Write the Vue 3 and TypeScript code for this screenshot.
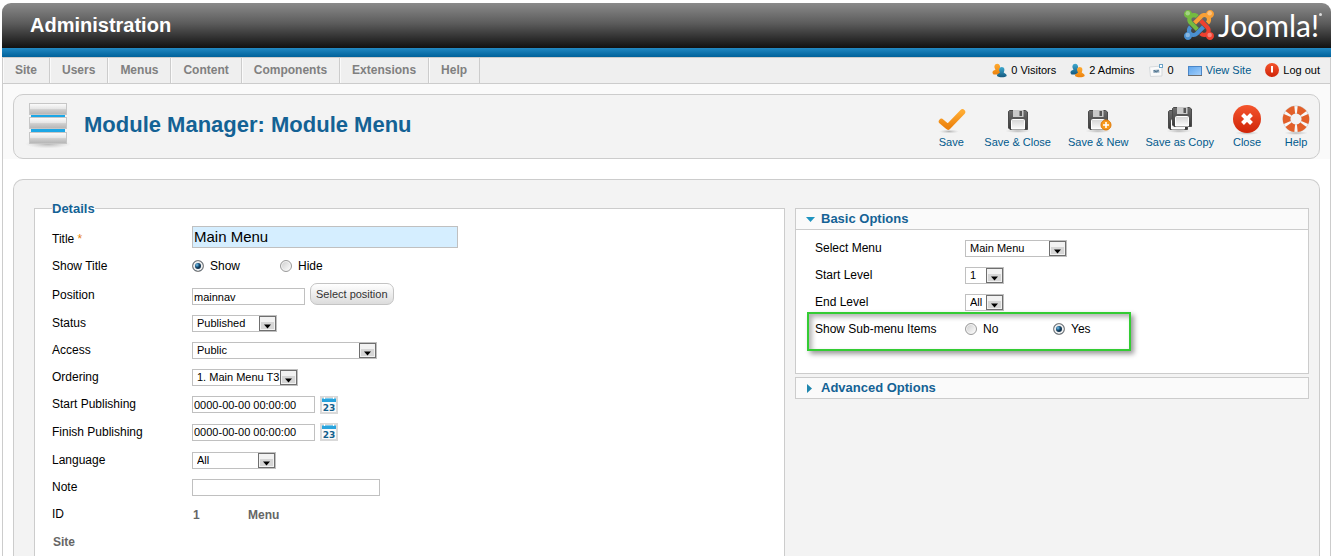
<script setup lang="ts">
import { reactive, ref } from 'vue'

interface SelectField {
  id: string
  label: string
  value: string
  size: string
}

const menu: string[] = ['Site', 'Users', 'Menus', 'Content', 'Components', 'Extensions', 'Help']

const title = ref('Main Menu')
const showTitle = ref('1')
const position = ref('mainnav')
const startPublishing = ref('0000-00-00 00:00:00')
const finishPublishing = ref('0000-00-00 00:00:00')
const note = ref('')
const showSubMenu = ref('1')

const detailSelects = reactive<SelectField[]>([
  { id: 'status', label: 'Status', value: 'Published', size: 'w-status' },
  { id: 'access', label: 'Access', value: 'Public', size: 'w-access' },
  { id: 'ordering', label: 'Ordering', value: '1. Main Menu T3', size: 'w-ordering' },
])

const optionSelects = reactive<SelectField[]>([
  { id: 'menutype', label: 'Select Menu', value: 'Main Menu', size: 'w-menu' },
  { id: 'start-level', label: 'Start Level', value: '1', size: 'w-level' },
  { id: 'end-level', label: 'End Level', value: 'All', size: 'w-level' },
])

const lifebuoyAngles: number[] = [0, 60, 120, 180, 240, 300]
</script>

<template>
  <div class="page">
    <svg class="defs" width="0" height="0" aria-hidden="true">
      <defs>
        <linearGradient id="g-orange" x1="0" y1="0" x2="0" y2="1">
          <stop offset="0" stop-color="#ffab32" /><stop offset="1" stop-color="#ec820d" />
        </linearGradient>
        <linearGradient id="g-teal" x1="0" y1="0" x2="0" y2="1">
          <stop offset="0" stop-color="#3fa9cf" /><stop offset="1" stop-color="#14597f" />
        </linearGradient>
        <linearGradient id="g-dark" x1="0" y1="0" x2="0" y2="1">
          <stop offset="0" stop-color="#6d6d6d" /><stop offset="1" stop-color="#393939" />
        </linearGradient>
        <linearGradient id="g-paper" x1="0" y1="0" x2="0" y2="1">
          <stop offset="0" stop-color="#d4d4d4" /><stop offset="1" stop-color="#fbfbfb" />
        </linearGradient>
        <linearGradient id="g-red" x1="0" y1="0" x2="0" y2="1">
          <stop offset="0" stop-color="#f4552d" /><stop offset="1" stop-color="#cf2408" />
        </linearGradient>
        <linearGradient id="g-slab" x1="0" y1="0" x2="0" y2="1">
          <stop offset="0" stop-color="#fdfdfd" /><stop offset="0.5" stop-color="#e4e4e4" />
          <stop offset="0.55" stop-color="#cfcfcf" /><stop offset="1" stop-color="#b4b4b4" />
        </linearGradient>
        <linearGradient id="g-screen" x1="0" y1="0" x2="1" y2="1">
          <stop offset="0" stop-color="#5ea6ee" /><stop offset="1" stop-color="#a5d0fb" />
        </linearGradient>
        <radialGradient id="g-shadow">
          <stop offset="0" stop-color="#999" stop-opacity="0.7" /><stop offset="1" stop-color="#bbb" stop-opacity="0" />
        </radialGradient>
        <g id="floppy">
          <path d="M1.5 0.5H17.5L19.5 2V19.5H2L0.5 18V1.5Z" fill="url(#g-dark)" stroke="#4a4a4a" />
          <rect x="5" y="0" width="10.500" height="7" fill="#c9c9c9" />
          <rect x="11.500" y="1" width="2.500" height="5" fill="#555" />
          <path d="M4.500 9.500H15.500Q16.500 9.500 16.500 10.500V19H3.500V10.500Q3.500 9.500 4.500 9.500Z" fill="url(#g-paper)" stroke="#fff" />
        </g>
        <path id="knot-tail" d="M16.719 14.759L14.22 17.26l-2.37 2.37-.462.466c-1.368 1.365-3.297 1.83-5.047 1.397-.327 1.424-1.604 2.49-3.13 2.49C1.438 23.983 0 22.547 0 20.772c0-1.518 1.055-2.789 2.469-3.123-.446-1.76.016-3.705 1.396-5.08l.179-.18 2.37 2.37-.184.181c-.769.779-.769 2.024 0 2.789.771.78 2.022.78 2.787 0l.465-.465 2.367-2.371 2.502-2.506z" />
        <path id="knot-head" d="M17.643 21.411c-1.822.563-3.885.12-5.328-1.318l-.18-.185 2.365-2.369.18.184c.771.768 2.018.768 2.787 0 .765-.765.769-2.010-.004-2.781l-.466-.465-2.365-2.370-2.502-2.503 2.370-2.369 2.499 2.505 2.367 2.370.464.464c1.365 1.360 1.846 3.278 1.411 5.021 1.560.224 2.759 1.560 2.759 3.180 0 1.784-1.439 3.210-3.209 3.210-1.545 0-2.851-1.096-3.135-2.565z" />
      </defs>
    </svg>

    <header class="header">
      <span class="site-name">Administration</span>
      <div class="logo">
        <svg class="logo-mark" width="30" height="30" viewBox="0 0 24 24" aria-hidden="true">
          <use href="#knot-tail" fill="#4a90d0" />
          <use href="#knot-head" fill="#ef4030" />
          <use href="#knot-tail" fill="#f9a035" transform="rotate(180 12 12)" />
          <use href="#knot-head" fill="#74bb40" transform="rotate(180 12 12)" />
          <g fill="#fff" opacity="0.35">
            <circle cx="3" cy="2.500" r="1.800" /><circle cx="20.500" cy="2.500" r="1.800" />
            <circle cx="20.500" cy="20" r="1.800" /><circle cx="3" cy="20" r="1.800" />
          </g>
        </svg>
        <span class="logo-text">Joomla!</span><span class="logo-dot"></span>
      </div>
    </header>
    <div class="stripe"></div>

    <div class="menubar">
      <nav class="menu">
        <a v-for="item in menu" :key="item" href="#">{{ item }}</a>
      </nav>
      <div class="status">
        <span class="stat">
          <svg width="15" height="15" viewBox="0 0 15 15" aria-hidden="true">
            <path d="M0.500 10C0.500 7 3 7.500 3.500 6.500C1.500 4 2.500 0.800 5.200 0.800S9 4 7.300 6.500L9 9V11.500H1.500Z" fill="url(#g-orange)" />
            <path d="M5 13C5 10.500 7.500 10.500 8 9.500C6.500 7 7 4 9.800 4S13 7 11.700 9.500C12.500 10.500 14.700 10.500 14.700 13C13 14.800 7 14.800 5 13Z" fill="url(#g-teal)" />
          </svg>
          0 Visitors
        </span>
        <span class="stat">
          <svg width="15" height="15" viewBox="0 0 15 15" aria-hidden="true">
            <path d="M0.500 10C0.500 7 3 7.500 3.500 6.500C1.500 4 2.500 0.800 5.200 0.800S9 4 7.300 6.500L9 9V11.500H1.500Z" fill="url(#g-teal)" />
            <path d="M5 13C5 10.500 7.500 10.500 8 9.500C6.500 7 7 4 9.800 4S13 7 11.700 9.500C12.500 10.500 14.700 10.500 14.700 13C13 14.800 7 14.800 5 13Z" fill="url(#g-orange)" />
          </svg>
          2 Admins
        </span>
        <span class="stat">
          <svg width="15" height="15" viewBox="0 0 15 15" aria-hidden="true">
            <path d="M0.500 4L13 3V13L1.500 13.500Z" fill="#fafafa" stroke="#d5d9dc" />
            <path d="M4 7L10 6.500L10.500 9.500L4.500 10Z" fill="#8fa8bb" />
            <path d="M5 7.500L7.500 9L9.500 7" fill="none" stroke="#466b86" />
            <rect x="10.500" y="1.500" width="3" height="3" fill="#fff" stroke="#6ba3c8" />
          </svg>
          0
        </span>
        <a class="stat link" href="#">
          <svg width="14" height="15" viewBox="0 0 14 15" aria-hidden="true">
            <rect x="0.500" y="3.500" width="13" height="9" fill="url(#g-screen)" stroke="#4a86c8" />
            <path d="M0 12.500H14" stroke="#6c6c6c" />
          </svg>
          View Site
        </a>
        <a class="stat" href="#">
          <svg width="14" height="15" viewBox="0 0 14 15" aria-hidden="true">
            <circle cx="7" cy="7" r="7" fill="url(#g-red)" />
            <path d="M7 3V9.500" stroke="#fff" stroke-width="2" />
          </svg>
          Log out
        </a>
      </div>
    </div>

    <div class="toolbar-wrap">
      <section class="toolbar">
        <svg class="module-icon" width="48" height="48" viewBox="0 0 48 48" aria-hidden="true">
          <ellipse cx="24" cy="43" rx="23" ry="4.500" fill="url(#g-shadow)" />
          <rect x="7" y="10" width="34" height="24" fill="#1ba7e6" />
          <g fill="url(#g-slab)" stroke="#c6c6c6">
            <rect x="5.500" y="2.500" width="37" height="11" />
            <rect x="5.500" y="16.500" width="37" height="11" />
            <rect x="5.500" y="31.500" width="37" height="11" />
          </g>
        </svg>
        <h1>Module Manager: Module Menu</h1>
        <div class="actions">
          <button type="button">
            <svg width="32" height="32" viewBox="0 0 32 32" aria-hidden="true">
              <ellipse cx="14" cy="27.500" rx="10" ry="2" fill="url(#g-shadow)" />
              <path d="M6.500 17.500L13 23L27.500 8" fill="none" stroke="url(#g-orange)" stroke-width="5.500" stroke-linecap="round" stroke-linejoin="round" />
            </svg>
            Save
          </button>
          <button type="button">
            <svg width="32" height="32" viewBox="0 0 32 32" aria-hidden="true">
              <ellipse cx="16" cy="27" rx="13" ry="2" fill="url(#g-shadow)" />
              <use href="#floppy" x="6" y="6" />
            </svg>
            Save &amp; Close
          </button>
          <button type="button">
            <svg width="32" height="32" viewBox="0 0 32 32" aria-hidden="true">
              <ellipse cx="16" cy="27" rx="13" ry="2" fill="url(#g-shadow)" />
              <use href="#floppy" x="6" y="6" />
              <circle cx="24" cy="21" r="5" fill="#f79a1e" stroke="#e07a08" />
              <path d="M24 18V24M21 21H27" stroke="#fff" stroke-width="1.600" />
            </svg>
            Save &amp; New
          </button>
          <button type="button">
            <svg width="32" height="32" viewBox="0 0 32 32" aria-hidden="true">
              <ellipse cx="15" cy="27" rx="13" ry="2" fill="url(#g-shadow)" />
              <use href="#floppy" x="4" y="6" />
              <use href="#floppy" x="8" y="3" />
            </svg>
            Save as Copy
          </button>
          <button type="button">
            <svg width="32" height="32" viewBox="0 0 32 32" aria-hidden="true">
              <ellipse cx="16" cy="29" rx="12" ry="2" fill="url(#g-shadow)" />
              <circle cx="16" cy="15" r="14" fill="url(#g-red)" />
              <path d="M11.500 10.500L20.500 19.500M20.500 10.500L11.500 19.500" stroke="#fff" stroke-width="4" />
            </svg>
            Close
          </button>
          <button type="button">
            <svg width="32" height="32" viewBox="0 0 32 32" aria-hidden="true">
              <ellipse cx="16" cy="29" rx="12" ry="2" fill="url(#g-shadow)" />
              <circle cx="16" cy="15" r="9.500" fill="none" stroke="#d0d0d0" stroke-width="8" />
              <circle cx="16" cy="15" r="9.500" fill="none" stroke="#f8f8f8" stroke-width="6.600" />
              <path
                v-for="a in lifebuoyAngles"
                :key="a"
                d="M21.300 13L28.200 9.900A13.200 13.200 0 0 1 28.200 20.100L21.300 17A5.500 5.500 0 0 0 21.300 13Z"
                fill="#e2602a"
                :transform="`rotate(${a} 16 15)`"
              />
            </svg>
            Help
          </button>
        </div>
      </section>
    </div>

    <main class="content">
      <form class="columns" @submit.prevent>
        <fieldset class="details">
          <legend>Details</legend>

          <div class="row row-title">
            <label for="title">Title<span class="star"> *</span></label>
            <input id="title" v-model="title" class="text big" type="text" />
          </div>
          <div class="row row-radio" role="radiogroup" aria-label="Show Title">
            <span class="label">Show Title</span>
            <label class="radio"><input v-model="showTitle" type="radio" name="showtitle" value="1" />Show</label>
            <label class="radio"><input v-model="showTitle" type="radio" name="showtitle" value="0" />Hide</label>
          </div>
          <div class="row row-position">
            <label for="position">Position</label>
            <input id="position" v-model="position" class="text w-position" type="text" />
            <button class="pick" type="button">Select position</button>
          </div>
          <div v-for="f in detailSelects" :key="f.id" class="row">
            <label :for="f.id">{{ f.label }}</label>
            <span class="select" :class="f.size">
              <select :id="f.id" v-model="f.value"><option>{{ f.value }}</option></select>
              <svg class="arrow" width="17" height="15" viewBox="0 0 17 15" aria-hidden="true">
                <rect x="0.500" y="0.500" width="16" height="14" fill="#f2f2f2" stroke="#6f6f6f" />
                <rect x="2" y="6" width="13" height="7" fill="#d6d6d6" />
                <path d="M5 8.500H12L8.500 12.500Z" fill="#000" />
              </svg>
            </span>
          </div>
          <div class="row">
            <label for="publish-up">Start Publishing</label>
            <input id="publish-up" v-model="startPublishing" class="text w-date" type="text" />
            <button class="calendar" type="button" aria-label="Pick start date">
              <svg width="18" height="18" viewBox="0 0 18 18" aria-hidden="true">
                <rect width="18" height="18" fill="#d9d9d9" />
                <rect x="2" y="2" width="14" height="14" fill="#fafafa" />
                <path d="M2 2H16V6H2Z" fill="#29a3dc" />
                <path d="M2 2.500H16" stroke="#79cbee" />
                <path d="M4.500 1V3M13.500 1V3" stroke="#fff" />
                <text x="9" y="15" text-anchor="middle" class="cal-day">23</text>
              </svg>
            </button>
          </div>
          <div class="row tall">
            <label for="publish-down">Finish Publishing</label>
            <input id="publish-down" v-model="finishPublishing" class="text w-date" type="text" />
            <button class="calendar" type="button" aria-label="Pick finish date">
              <svg width="18" height="18" viewBox="0 0 18 18" aria-hidden="true">
                <rect width="18" height="18" fill="#d9d9d9" />
                <rect x="2" y="2" width="14" height="14" fill="#fafafa" />
                <path d="M2 2H16V6H2Z" fill="#29a3dc" />
                <path d="M2 2.500H16" stroke="#79cbee" />
                <path d="M4.500 1V3M13.500 1V3" stroke="#fff" />
                <text x="9" y="15" text-anchor="middle" class="cal-day">23</text>
              </svg>
            </button>
          </div>
          <div class="row tall">
            <label for="language">Language</label>
            <span class="select w-language">
              <select id="language"><option>All</option></select>
              <svg class="arrow" width="17" height="15" viewBox="0 0 17 15" aria-hidden="true">
                <rect x="0.500" y="0.500" width="16" height="14" fill="#f2f2f2" stroke="#6f6f6f" />
                <rect x="2" y="6" width="13" height="7" fill="#d6d6d6" />
                <path d="M5 8.500H12L8.500 12.500Z" fill="#000" />
              </svg>
            </span>
          </div>
          <div class="row">
            <label for="note">Note</label>
            <input id="note" v-model="note" class="text w-note" type="text" />
          </div>
          <div class="row">
            <label for="module-id">ID</label>
            <input id="module-id" class="readonly" type="text" value="1" readonly />
            <input class="readonly" type="text" value="Menu" aria-label="Module type" readonly />
          </div>
          <div class="row tall">
            <input class="readonly" type="text" value="Site" aria-label="Client" readonly />
          </div>
        </fieldset>

        <div class="options">
          <section class="panel">
            <h3>
              <a href="#">
                <svg width="9" height="9" viewBox="0 0 9 9" aria-hidden="true"><path d="M0 2H9L4.500 7Z" fill="#1f94c0" /></svg>
                Basic Options
              </a>
            </h3>
            <div class="panel-body">
              <div v-for="f in optionSelects" :key="f.id" class="row">
                <label :for="f.id">{{ f.label }}</label>
                <span class="select" :class="f.size">
                  <select :id="f.id" v-model="f.value"><option>{{ f.value }}</option></select>
                  <svg class="arrow" width="17" height="15" viewBox="0 0 17 15" aria-hidden="true">
                    <rect x="0.500" y="0.500" width="16" height="14" fill="#f2f2f2" stroke="#6f6f6f" />
                    <rect x="2" y="6" width="13" height="7" fill="#d6d6d6" />
                    <path d="M5 8.500H12L8.500 12.500Z" fill="#000" />
                  </svg>
                </span>
              </div>
              <div class="row highlighted" role="radiogroup" aria-label="Show Sub-menu Items">
                <span class="label">Show Sub-menu Items</span>
                <label class="radio"><input v-model="showSubMenu" type="radio" name="submenu" value="0" />No</label>
                <label class="radio"><input v-model="showSubMenu" type="radio" name="submenu" value="1" />Yes</label>
                <span class="highlight"></span>
              </div>
            </div>
          </section>
          <section class="panel">
            <h3>
              <a href="#">
                <svg width="9" height="9" viewBox="0 0 9 9" aria-hidden="true"><path d="M1 0V9L6 4.500Z" fill="#1f86ae" /></svg>
                Advanced Options
              </a>
            </h3>
          </section>
        </div>
      </form>
    </main>
  </div>
</template>

<style>
body {
  background: #fff;
}
</style>

<style scoped>
* {
  box-sizing: border-box;
}
.page {
  height: 100vh;
  overflow: hidden;
  padding: 3px 2px 0;
  display: flex;
  flex-direction: column;
  font: 12px/15px 'Liberation Sans', Arial, sans-serif;
  color: #000;
}
a {
  color: inherit;
  text-decoration: none;
}
svg {
  display: block;
  flex: none;
}
button,
input,
select {
  font-family: inherit;
  margin: 0;
  color: inherit;
}
button {
  cursor: pointer;
}
.defs {
  position: absolute;
}
.header {
  height: 45px;
  flex: none;
  display: flex;
  align-items: center;
  justify-content: space-between;
  padding: 0 9px 2px 28px;
  background: linear-gradient(#8a8a8a, #5c5c5c 45%, #111);
  border-top-left-radius: 9px;
  border-top-right-radius: 9px;
}
.stripe {
  height: 9px;
  flex: none;
  background: linear-gradient(#2289c3, #00619a);
}
.site-name {
  font-size: 20px;
  line-height: 24px;
  font-weight: bold;
  color: #fff;
}
.logo {
  display: flex;
  align-items: center;
}
.logo-text {
  margin-left: 4px;
  font: 400 30px/36px Lato, sans-serif;
  color: #fff;
}
.logo-dot {
  width: 3px;
  height: 3px;
  border-radius: 50%;
  background: #ddd;
  align-self: flex-start;
  margin-top: 6px;
}
.menubar {
  height: 27px;
  flex: none;
  display: flex;
  justify-content: space-between;
  background: #efefef;
  border: 1px solid #ccc;
}
.menu {
  display: flex;
}
.menu a {
  padding: 0 12px;
  border-right: 1px solid #ccc;
  box-shadow: inset 1px 0 #fafafa;
  font-weight: bold;
  line-height: 25px;
  color: #808080;
}
.status {
  display: flex;
  align-items: center;
  gap: 14px;
  padding-right: 10px;
  font-size: 11px;
}
.stat {
  display: flex;
  align-items: center;
  gap: 4px;
}
.link {
  color: #025a8d;
}
.toolbar-wrap {
  flex: none;
  padding: 10px 10px 0;
  background: #fafafa;
  border: solid #ccc;
  border-width: 0 1px;
}
.toolbar {
  height: 65px;
  display: flex;
  align-items: center;
  border: 1px solid #ccc;
  border-radius: 10px;
  background: #f3f3f3;
  padding: 0 7px 0 10px;
}
.module-icon {
  margin-bottom: 3px;
}
h1 {
  margin: 0 0 4px 12px;
  font-size: 22px;
  line-height: 26px;
  color: #146295;
}
.actions {
  margin-left: auto;
  display: flex;
  gap: 17px;
}
.actions button {
  min-width: 32px;
  padding: 0;
  border: 0;
  background: none;
  display: flex;
  flex-direction: column;
  align-items: center;
  font-size: 11px;
  line-height: 13px;
  color: #025a8d;
}
.content {
  flex: 1;
  min-height: 0;
  padding: 20px 10px 0;
  border: solid #ccc;
  border-width: 0 1px;
}
.columns {
  height: 100%;
  display: grid;
  grid-template-columns: minmax(0, 751fr) minmax(0, 514fr);
  gap: 10px;
  padding: 21px 10px 0 20px;
  border: solid #ccc;
  border-width: 1px 1px 0;
  border-radius: 10px 10px 0 0;
  background: #f3f3f3;
}
.details {
  margin: 0;
  min-width: 0;
  border: solid #ccc;
  border-width: 1px 1px 0;
  padding: 6px 17px 0;
  background: #fff;
}
legend {
  padding: 0;
  font-size: 13px;
  line-height: 15px;
  font-weight: bold;
  color: #146295;
}
.row {
  min-height: 27px;
  display: flex;
  align-items: center;
}
.row > label:first-child,
.label {
  width: 140px;
  flex: none;
}
.row-title {
  min-height: 30px;
}
.row-title > label:first-child {
  padding-top: 5px;
}
.row-radio {
  min-height: 29px;
}
.row-position {
  min-height: 29px;
  align-items: flex-start;
  padding-top: 2px;
}
.row-position > label:first-child {
  padding-top: 5px;
}
.tall {
  min-height: 28px;
}
.star {
  color: #e8820f;
}
.text {
  height: 17px;
  border: 1px solid #c0c0c0;
  border-radius: 0;
  background: #fff;
  padding: 0 1px;
  font-size: 11px;
}
.big {
  width: 266px;
  height: 22px;
  padding: 0 1px 2px;
  background: #d5eeff;
  font-size: 15px;
}
.w-position {
  width: 113px;
  margin-top: 5px;
}
.w-date {
  width: 123px;
}
.w-note {
  width: 188px;
}
.w-status {
  width: 85px;
}
.w-access {
  width: 185px;
}
.w-ordering {
  width: 106px;
}
.w-language {
  width: 84px;
}
.w-menu {
  width: 102px;
}
.w-level {
  width: 39px;
}
.pick {
  height: 22px;
  margin-left: 5px;
  padding: 0 5px;
  border: 1px solid #c4c4c4;
  border-radius: 7px;
  background: linear-gradient(#fff, #dcdcdc);
  font-size: 11px;
  color: #333;
}
.select {
  position: relative;
  height: 17px;
}
.select select {
  display: block;
  width: 100%;
  height: 17px;
  appearance: none;
  border: 1px solid #c0c0c0;
  border-radius: 0;
  background: #fff;
  padding: 0 0 0 4px;
  font-size: 11px;
  line-height: 15px;
}
.arrow {
  position: absolute;
  top: 1px;
  right: 1px;
  pointer-events: none;
}
.radio {
  width: 88px;
  display: flex;
  align-items: center;
  gap: 6px;
}
.radio input {
  appearance: none;
  width: 12px;
  height: 12px;
  margin-bottom: 2px;
  border: 1px solid #9a9a9a;
  border-radius: 50%;
  background: linear-gradient(135deg, #ccc, #fff);
  box-shadow: inset 0 0 0 1px #f4f4f4;
}
.radio input:checked {
  background: radial-gradient(circle at 4px 4px, #7cc4ea, #1c5c88 2px, #12344f 3px);
  border-color: #808080;
  box-shadow: inset 0 0 0 2px #eee;
}
.calendar {
  margin-left: 5px;
  padding: 0;
  border: 0;
  background: none;
}
.cal-day {
  font: bold 9px 'DejaVu Sans', sans-serif;
  fill: #135f8c;
}
.readonly {
  width: 55px;
  border: 0;
  padding: 0 1px;
  background: none;
  font-size: 12px;
  font-weight: bold;
  color: #666;
}
.options {
  padding-top: 7px;
  display: flex;
  flex-direction: column;
  gap: 3px;
}
.panel {
  border: 1px solid #ccc;
  background: #fff;
}
.panel h3 {
  margin: 0;
  background: #fafafa;
  font-size: 13px;
  line-height: 20px;
  color: #146295;
}
.panel h3 a {
  display: flex;
  align-items: center;
  gap: 6px;
  padding-left: 10px;
}
.panel-body {
  min-height: 144px;
  border-top: 1px solid #ccc;
  padding: 5px 19px 0;
}
.panel-body .row > label:first-child,
.panel-body .label {
  width: 150px;
}
.highlighted {
  position: relative;
}
.highlight {
  position: absolute;
  left: -8px;
  top: -4px;
  width: 324px;
  height: 39px;
  border: 2px solid #33cc33;
  box-shadow: 3px 3px 5px rgba(0, 0, 0, 0.4), inset 3px 3px 5px rgba(0, 0, 0, 0.3);
  pointer-events: none;
}
</style>
